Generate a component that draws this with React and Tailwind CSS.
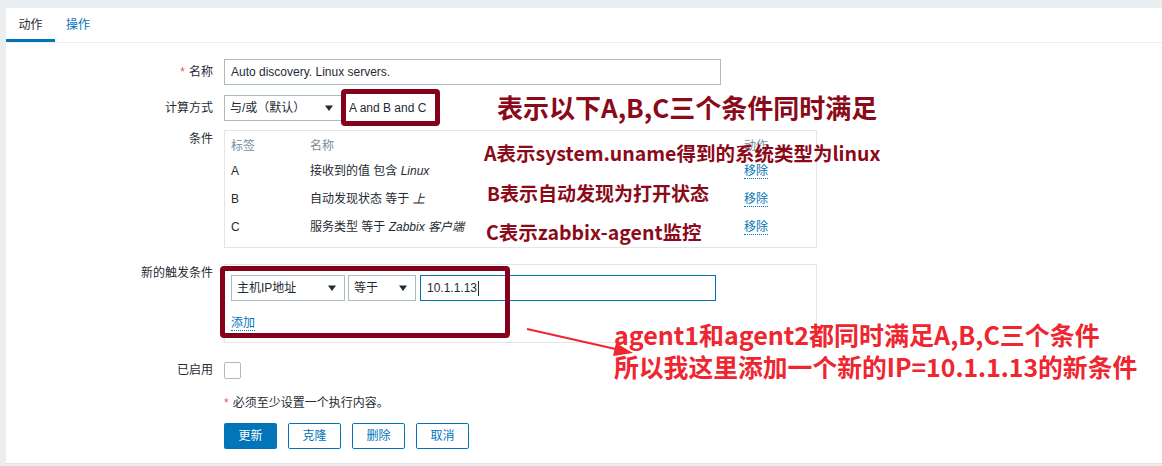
import React from 'react';

const font = { fontFamily: '"Liberation Sans", "Noto Sans CJK SC", sans-serif' };
const noteFont = { fontFamily: '"Noto Sans CJK SC", sans-serif' };

const Arrow = () => (
  <svg width="10" height="8" viewBox="0 0 10 8" className="shrink-0">
    <path d="M1 1.5 L9 1.5 L5 7 Z" fill="#1f2c33" />
  </svg>
);

const Select = ({ value, width }) => (
  <div
    className={`flex items-center justify-between h-[26px] border border-[#acbbc2] bg-white pl-[5px] pr-[7px] text-[12px] text-[#1f2c33] ${width}`}
  >
    <span>{value}</span>
    <Arrow />
  </div>
);

const Row = ({ label, required, children, className = '', labelClass = 'items-center' }) => (
  <div className={`flex ${labelClass} ${className}`}>
    <div className="w-[207px] text-right text-[12px] text-[#1f2c33] shrink-0">
      {required && <span className="text-[#e45959] mr-[4px]">*</span>}
      {label}
    </div>
    <div className="ml-[11px]">{children}</div>
  </div>
);

const RemoveLink = () => (
  <span className="text-[#0275b8] border-b border-dotted border-[#0275b8] leading-[14px]">移除</span>
);

const conditions = [
  { tag: 'A', text: '接收到的值 包含 ', value: 'Linux' },
  { tag: 'B', text: '自动发现状态 等于 ', value: '上' },
  { tag: 'C', text: '服务类型 等于 ', value: 'Zabbix 客户端' },
];

export default function App() {
  return (
    <div className="bg-[#ebeef0] h-[466px] pl-[6px] pt-[8px] overflow-hidden" style={font}>
      <div className="relative bg-white h-[456px] border-b border-[#dfe4e7]">
        {/* tabs */}
        <div className="flex h-[35px] border-b border-[#ebeef0]">
          <div className="flex items-center justify-center w-[49px] border-b-[3px] border-[#0275b8] text-[12px] text-[#1f2c33] pt-[3px]">
            动作
          </div>
          <div className="flex items-center px-[11px] text-[12px] text-[#0275b8]">操作</div>
        </div>

        {/* form */}
        <div className="pt-[16px]">
          <Row label="名称" required>
            <div className="w-[497px] h-[26px] border border-[#acbbc2] flex items-center pl-[6px] text-[12px] text-[#1f2c33]">
              Auto discovery. Linux servers.
            </div>
          </Row>

          <Row label="计算方式" className="mt-[10px]">
            <div className="flex items-center">
              <Select value="与/或（默认）" width="w-[118px]" />
              <span className="ml-[7px] text-[12px] text-[#1f2c33]">A and B and C</span>
            </div>
          </Row>

          <Row label="条件" className="mt-[9px]" labelClass="items-start">
            <div className="w-[593px] border border-[#e2e6e8] pt-[4px] pb-[6px] px-[6px] text-[12px]">
              <div className="grid grid-cols-[79px_434px_1fr] h-[22px] items-center text-[#768d99]">
                <span>标签</span>
                <span>名称</span>
                <span>动作</span>
              </div>
              {conditions.map((c) => (
                <div key={c.tag} className="grid grid-cols-[79px_434px_1fr] h-[28px] items-center text-[#1f2c33]">
                  <span>{c.tag}</span>
                  <span>
                    {c.text}
                    <i>{c.value}</i>
                  </span>
                  <span>
                    <RemoveLink />
                  </span>
                </div>
              ))}
            </div>
          </Row>

          <Row label="新的触发条件" className="mt-[16px]" labelClass="items-start">
            <div className="w-[593px] h-[79px] border border-[#e2e6e8] pt-[10px] px-[6px] text-[12px]">
              <div className="flex items-center">
                <Select value="主机IP地址" width="w-[114px]" />
                <div className="ml-[3px]">
                  <Select value="等于" width="w-[68px]" />
                </div>
                <div className="ml-[4px] w-[296px] h-[26px] border border-[#0275b8] flex items-center pl-[6px] text-[#1f2c33]">
                  10.1.1.13
                  <span className="inline-block w-[1px] h-[15px] bg-[#1f2c33] ml-[1px]" />
                </div>
              </div>
              <div className="mt-[13px]">
                <span className="text-[#0275b8] border-b border-dotted border-[#0275b8]">添加</span>
              </div>
            </div>
          </Row>

          <Row label="已启用" className="mt-[18px]">
            <div className="w-[17px] h-[17px] border border-[#acbbc2] rounded-[2px] bg-white" />
          </Row>

          <div className="ml-[218px] mt-[15px] text-[12px] text-[#1f2c33]">
            <span className="text-[#e45959] mr-[4px]">*</span>必须至少设置一个执行内容。
          </div>

          <div className="ml-[218px] mt-[11px] flex gap-[11px] text-[12px]">
            <div className="w-[53px] h-[26px] flex items-center justify-center bg-[#0275b8] text-white rounded-[2px]">更新</div>
            <div className="w-[53px] h-[26px] flex items-center justify-center border border-[#0275b8] text-[#0275b8] rounded-[2px]">克隆</div>
            <div className="w-[53px] h-[26px] flex items-center justify-center border border-[#0275b8] text-[#0275b8] rounded-[2px]">删除</div>
            <div className="w-[53px] h-[26px] flex items-center justify-center border border-[#0275b8] text-[#0275b8] rounded-[2px]">取消</div>
          </div>
        </div>

        {/* annotations */}
        <div className="absolute left-[335px] top-[81px] w-[99px] h-[37px] border-[5px] border-[#85001b] rounded-[4px]" />
        <div className="absolute left-[214px] top-[258px] w-[290px] h-[72px] border-[5px] border-[#85001b] rounded-[4px]" />

        <div className="absolute left-[491px] top-[86px] text-[26px] leading-none font-bold text-[#8b0a1a] whitespace-nowrap" style={noteFont}>
          表示以下A,B,C三个条件同时满足
        </div>
        <div className="absolute left-[478px] top-[135px] text-[19.5px] leading-none font-bold text-[#8b0a1a] whitespace-nowrap" style={noteFont}>
          A表示system.uname得到的系统类型为linux
        </div>
        <div className="absolute left-[481px] top-[175px] text-[19px] leading-none font-bold text-[#8b0a1a] whitespace-nowrap" style={noteFont}>
          B表示自动发现为打开状态
        </div>
        <div className="absolute left-[480px] top-[214px] text-[19.5px] leading-none font-bold text-[#8b0a1a] whitespace-nowrap" style={noteFont}>
          C表示zabbix-agent监控
        </div>

        <svg className="absolute left-[518px] top-[318px]" width="112" height="32" viewBox="0 0 112 32">
          <line x1="3" y1="3" x2="96" y2="24" stroke="#ef2530" strokeWidth="2.2" />
          <path d="M109 27 L92 17 L89 30 Z" fill="#ef2530" />
        </svg>

        <div className="absolute left-[608px] top-[314px] text-[25px] leading-none font-bold text-[#ef2530] whitespace-nowrap" style={noteFont}>
          agent1和agent2都同时满足A,B,C三个条件
        </div>
        <div className="absolute left-[608px] top-[346px] text-[24.8px] leading-none font-bold text-[#ef2530] whitespace-nowrap" style={noteFont}>
          所以我这里添加一个新的IP=10.1.1.13的新条件
        </div>
      </div>
    </div>
  );
}
